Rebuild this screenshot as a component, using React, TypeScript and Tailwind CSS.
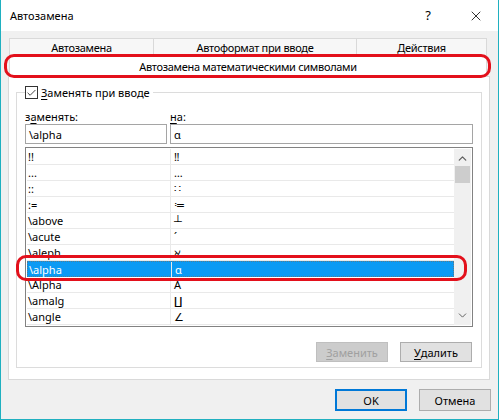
import { Check, ChevronDown, ChevronUp, X } from "lucide-react";

type Row = { key: string; value: string };

const rows: Row[] = [
  { key: "!!", value: "‼" },
  { key: "...", value: "…" },
  { key: "::", value: "∷" },
  { key: ":=", value: "≔" },
  { key: "\\above", value: "┴" },
  { key: "\\acute", value: "´" },
  { key: "\\aleph", value: "ℵ" },
  { key: "\\alpha", value: "α" },
  { key: "\\Alpha", value: "Α" },
  { key: "\\amalg", value: "∐" },
  { key: "\\angle", value: "∠" },
];

const SELECTED = 7;

function Underlined({ first, rest }: { first: string; rest: string }) {
  return (
    <>
      <span className="underline underline-offset-2">{first}</span>
      {rest}
    </>
  );
}

export default function App() {
  return (
    <div
      className="relative flex h-[420px] w-[499px] flex-col border-x border-b border-[#1fb0c0] bg-[#f0f0f0] text-[11px] leading-none text-black"
      style={{ fontFamily: '"Noto Sans", "Segoe UI", sans-serif' }}
    >
      {/* title bar */}
      <div className="flex h-[31px] shrink-0 items-center bg-white pl-[9px]">
        <span className="flex-1 text-[11px]">Автозамена</span>
        <span className="mr-[37px] text-[13px]">?</span>
        <X size={16} strokeWidth={1.2} className="mr-[14px]" />
      </div>

      {/* tabs */}
      <div className="ml-[7px] mt-[7px] flex w-[482px] flex-col tracking-[-0.3px]">
        <div className="ml-[1px] flex h-[17px] w-[478px] border-x border-t border-[#d9d9d9] bg-[#f7f7f7]">
          <div className="flex w-[144px] items-center justify-center border-r border-[#d9d9d9]">Автозамена</div>
          <div className="flex w-[203px] items-center justify-center border-r border-[#d9d9d9]">Автоформат при вводе</div>
          <div className="flex flex-1 items-center justify-center">Действия</div>
        </div>
        <div className="ml-[1px] flex h-[21px] w-[478px] items-center justify-center border-x border-t border-[#d9d9d9] bg-white">
          Автозамена математическими символами
        </div>

        {/* panel */}
        <div className="flex h-[304px] flex-col border border-[#d9d9d9] bg-white px-[7px] pt-[15px] tracking-normal">
          <div className="relative h-[276px] w-[466px] border border-[#dcdcdc] px-[8px] pt-[16px]">
            <div className="absolute left-[8px] top-[-7px] flex items-center gap-[3px] bg-white pr-[3px]">
              <div className="flex h-[13px] w-[13px] items-center justify-center border border-[#333]">
                <Check size={12} strokeWidth={1.6} />
              </div>
              <span>
                <Underlined first="З" rest="аменять при вводе" />
              </span>
            </div>

            <div className="flex h-[14px] items-center">
              <span className="w-[145px]">
                з<span className="underline underline-offset-2">а</span>менять:
              </span>
              <span>
                <Underlined first="н" rest="а:" />
              </span>
            </div>

            <div className="mt-[1px] flex h-[20px] w-[448px] gap-[3px]">
              <div className="flex w-[142px] items-center border border-[#a5a5a5] pl-[3px]">\alpha</div>
              <div className="flex flex-1 items-center border border-[#a5a5a5] pl-[3px]">α</div>
            </div>

            <div className="mt-[3px] flex h-[180px] w-[448px] border border-[#828282] p-[1px]">
              <div className="flex flex-1 flex-col">
                {rows.map((r, i) => (
                  <div
                    key={r.key}
                    className={
                      i === SELECTED
                        ? "flex h-[16px] shrink-0 items-center border border-dotted border-[#5a7a8a] bg-[#0b9af4] text-white"
                        : "flex h-[16px] shrink-0 items-center border-b border-[#e9e9e9]"
                    }
                  >
                    <span className="w-[144px] shrink-0 border-r border-[#e9e9e9] pl-[1px] leading-[15px]">{r.key}</span>
                    <span className="pl-[3px] leading-[15px]">{r.value}</span>
                  </div>
                ))}
              </div>
              <div className="flex w-[17px] flex-col items-center bg-[#f0f0f0]">
                <ChevronUp size={13} strokeWidth={2.4} className="mt-[3px] text-[#606060]" />
                <div className="mt-[1px] h-[17px] w-[15px] bg-[#cdcdcd]" />
                <div className="flex-1" />
                <ChevronDown size={13} strokeWidth={1.8} className="mb-[3px] text-[#606060]" />
              </div>
            </div>

            <div className="mt-[15px] flex justify-end gap-[12px] pr-[1px]">
              <div className="flex h-[20px] w-[72px] items-center justify-center border border-[#bfbfbf] bg-[#cccccc] text-[#a0a0a0]">
                <Underlined first="З" rest="аменить" />
              </div>
              <div className="flex h-[20px] w-[72px] items-center justify-center border border-[#adadad] bg-[#e1e1e1]">
                <Underlined first="У" rest="далить" />
              </div>
            </div>
          </div>
        </div>
      </div>

      {/* footer buttons */}
      <div className="mr-[7px] mt-[9px] flex justify-end gap-[12px]">
        <div className="flex h-[22px] w-[72px] items-center justify-center border-2 border-[#0078d7] bg-[#e1e1e1]">OK</div>
        <div className="flex h-[22px] w-[72px] items-center justify-center border border-[#adadad] bg-[#e1e1e1]">Отмена</div>
      </div>

      {/* red annotation outlines */}
      <div className="pointer-events-none absolute left-[3px] top-[54px] h-[24px] w-[487px] rounded-[10px] border-[3px] border-[#e3101b]" />
      <div className="pointer-events-none absolute left-[15px] top-[255px] h-[26px] w-[451px] rounded-[10px] border-[3px] border-[#e3101b]" />
    </div>
  );
}
